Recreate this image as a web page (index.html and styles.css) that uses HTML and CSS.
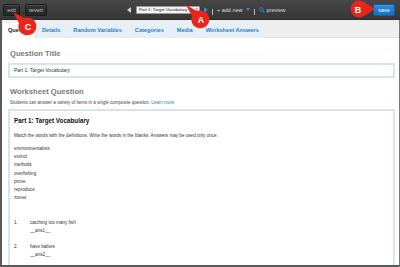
FILE: index.html
```html
<!DOCTYPE html>
<html>
<head>
<meta charset="utf-8">
<link rel="stylesheet" href="styles.css">
</head>
<body>
<div class="page">
  <header class="topbar">
    <button class="btn">exit</button>
    <button class="btn">revert</button>
    <nav class="nav">
      <span class="arrow-left"></span>
      <span class="select">Part 1: Target Vocabulary <span class="updown">&#8661;</span></span>
      <span class="arrow-right"></span>
      <span class="sep"></span>
      <span class="navlink">+ add new</span>
      <span class="caret"></span>
      <span class="sep"></span>
      <svg class="search" viewBox="0 0 10 10" width="6" height="6"><circle cx="4" cy="4" r="2.8" fill="none" stroke="#2b8fe0" stroke-width="1.6"/><line x1="6" y1="6" x2="9" y2="9" stroke="#2b8fe0" stroke-width="1.8"/></svg>
      <span class="navlink">preview</span>
    </nav>
    <button class="btn save">save</button>
  </header>
  <div class="main">
    <div class="tabs">
      <span class="tab active">Question</span>
      <span class="tab">Details</span>
      <span class="tab">Random Variables</span>
      <span class="tab">Categories</span>
      <span class="tab">Media</span>
      <span class="tab">Worksheet Answers</span>
    </div>
    <div class="content">
      <h2 class="label">Question Title</h2>
      <div class="input">Part 1: Target Vocabulary</div>
      <h2 class="label second">Worksheet Question</h2>
      <p class="hint">Students can answer a variety of items in a single composite question. <span class="link">Learn more</span></p>
      <div class="editor">
        <h3 class="part">Part 1: Target Vocabulary</h3>
        <p class="line">Match the words with the definitions. Write the words in the blanks. Answers may be used only once.</p>
        <ul class="words">
          <li>environmentalists</li>
          <li>extinct</li>
          <li>methods</li>
          <li>overfishing</li>
          <li>prove</li>
          <li>reproduce</li>
          <li>zones</li>
        </ul>
        <div class="item"><span class="num">1.</span><span>catching too many fish<br>__ans1__</span></div>
        <div class="item"><span class="num">2.</span><span>have babies<br>__ans2__</span></div>
      </div>
    </div>
  </div>
  <svg class="badge badge-c" width="30" height="30" viewBox="0 0 30 30"><path d="M2 2 L13 8 A9 9 0 1 1 8 13 Z" fill="#e8261b"/><text x="17" y="20" text-anchor="middle">C</text></svg>
  <svg class="badge badge-a" width="30" height="30" viewBox="0 0 30 30"><path d="M2 2 L13 8 A9 9 0 1 1 8 13 Z" fill="#e8261b"/><text x="17" y="20" text-anchor="middle">A</text></svg>
  <svg class="badge badge-b" width="30" height="22" viewBox="0 0 30 22"><path d="M28 11 L17 4 A8.5 8.5 0 1 0 17 18 Z" fill="#e8261b"/><text x="11" y="14.5" text-anchor="middle">B</text></svg>
</div>
</body>
</html>
```

FILE: styles.css
```css
* { box-sizing: border-box; }
html, body { margin: 0; padding: 0; }
body {
  width: 400px;
  height: 267px;
  overflow: hidden;
  font-family: "Liberation Sans", Arial, sans-serif;
  background: #fff;
}
.page {
  position: relative;
  width: 400px;
  height: 267px;
  display: flex;
  flex-direction: column;
}
.topbar {
  height: 20px;
  flex: none;
  display: flex;
  align-items: center;
  padding: 0 5px 0 3px;
  gap: 4px;
  background: linear-gradient(#474747, #363636);
  border-bottom: 1px solid #2a2a2a;
}
.btn {
  height: 12px;
  padding: 0 3px;
  margin: 0;
  font-family: inherit;
  font-size: 5.5px;
  line-height: 10px;
  color: #c8c8c8;
  background: linear-gradient(#333, #262626);
  border: 1px solid #1c1c1c;
  border-radius: 2px;
  box-shadow: inset 0 1px 0 rgba(255,255,255,0.12);
}
.btn:first-child { width: 17px; }
.btn:nth-child(2) { width: 22px; margin-left: 1px; }
.nav {
  display: flex;
  align-items: center;
  margin-left: 76px;
  gap: 2px;
  color: #ddd;
  font-size: 5.5px;
}
.arrow-left {
  width: 0; height: 0;
  border-top: 3px solid transparent;
  border-bottom: 3px solid transparent;
  border-right: 4px solid #cfcfcf;
  margin-right: 3px;
}
.select {
  width: 64px;
  height: 8px;
  background: #f4f4f4;
  border: 1px solid #999;
  border-radius: 1px;
  color: #222;
  font-size: 4.3px;
  line-height: 6px;
  padding-left: 2px;
  display: flex;
  justify-content: space-between;
  white-space: nowrap;
}
.updown { font-size: 4px; padding-right: 1px; color: #555; }
.arrow-right {
  width: 0; height: 0;
  border-top: 3.5px solid transparent;
  border-bottom: 3.5px solid transparent;
  border-left: 4px solid #2b8fe0;
  margin-left: 2px;
}
.sep {
  width: 1px;
  height: 6px;
  background: #bbb;
  margin: 4px 2px 0;
}
.navlink { color: #ddd; font-size: 5.5px; white-space: nowrap; }
.caret {
  width: 0; height: 0;
  border-left: 2.5px solid transparent;
  border-right: 2.5px solid transparent;
  border-top: 3px solid #2b8fe0;
  margin-left: 1px;
}
.search { display: block; }
.btn.save {
  margin-left: auto;
  width: 22px;
  color: #fff;
  background: linear-gradient(#2a8ce0, #1472c4);
  border-color: #0f5ea8;
}
.main {
  flex: 1;
  display: flex;
  flex-direction: column;
  border-left: 2px solid #5a5a5a;
  border-right: 1px solid #777;
  border-bottom: 2px solid #5a5a5a;
  overflow: hidden;
}
.tabs {
  flex: none;
  display: flex;
  gap: 3px;
  padding: 3px 0 0 1px;
  height: 18px;
  background: #eeeeee;
  border-bottom: 1px solid #e2e2e2;
}
.tab {
  height: 15px;
  padding: 0 5px;
  line-height: 15px;
  font-size: 5.6px;
  font-weight: bold;
  color: #2a80c8;
  background: #e4eff8;
  border-radius: 1px 1px 0 0;
  white-space: nowrap;
}
.tab.active {
  color: #222;
  background: #fff;
  width: 31px;
}
.content {
  flex: 1;
  padding: 0 4px 0 6px;
  display: flex;
  flex-direction: column;
}
.label {
  margin: 11px 0 0 2px;
  font-size: 7.6px;
  font-weight: bold;
  color: #7a7a7a;
  line-height: 9px;
}
.label.second { margin-top: 9px; }
.input {
  margin-top: 5px;
  height: 15px;
  border: 2px solid #d3e5ef;
  background: #fff;
  font-size: 5px;
  line-height: 11px;
  padding-left: 4px;
  color: #333;
}
.hint {
  margin: 4px 0 0 2px;
  font-size: 4.5px;
  line-height: 6px;
  color: #444;
}
.link { color: #2a80c8; }
.editor {
  margin-top: 3px;
  flex: 1;
  border: 2px solid #d3e5ef;
  border-bottom: none;
  padding: 5px 4px 0 4px;
  color: #333;
  font-size: 4.6px;
}
.part {
  margin: 1px 0 0;
  font-size: 6.3px;
  font-weight: bold;
  color: #111;
  line-height: 8px;
}
.line {
  margin: 8px 0 0;
  line-height: 6px;
}
.words {
  list-style: none;
  margin: 6px 0 0;
  padding: 0;
}
.words li { line-height: 8.2px; }
.item {
  display: flex;
  margin-top: 17px;
  line-height: 8px;
}
.item + .item { margin-top: 8px; }
.num { width: 16px; flex: none; }
.badge {
  position: absolute;
  overflow: visible;
}
.badge text {
  font-family: "Liberation Sans", Arial, sans-serif;
  font-weight: bold;
  font-size: 9px;
  fill: #fff;
}
.badge-c { left: 11px; top: 10px; }
.badge-a { left: 184px; top: 3px; }
.badge-b { left: 347px; top: -2px; }
```
